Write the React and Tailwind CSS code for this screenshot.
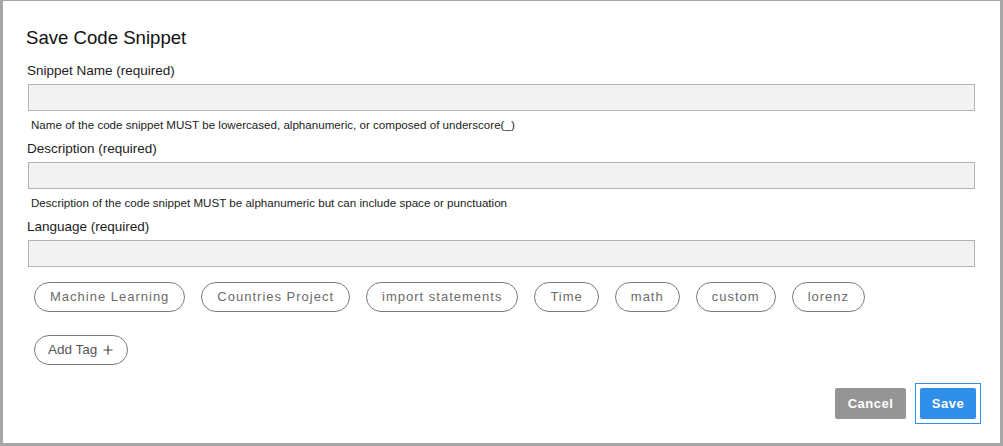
const tags = [
  'Machine Learning',
  'Countries Project',
  'import statements',
  'Time',
  'math',
  'custom',
  'lorenz',
]

const Field = ({ label, help, first }) => (
  <div className="flex flex-col">
    <label className={`${first ? 'mt-[14px]' : 'mt-[9px]'} text-[13.5px] leading-[16px] text-[#1c1c1c]`}>
      {label}
    </label>
    <input
      type="text"
      className="mt-[5px] ml-[1px] h-[27px] border border-[#b4b4b4] bg-[#f2f2f2] outline-none"
    />
    {help && (
      <p className="mt-[7px] ml-[4px] text-[11.6px] leading-[14px] text-[#222]">{help}</p>
    )}
  </div>
)

const App = () => {
  return (
    <div
      className="w-[1003px] h-[446px] bg-[#a7a7a7] pt-[1px] pl-[3px] pr-[3px] pb-[3px]"
      style={{ fontFamily: '"Liberation Sans", Arial, sans-serif' }}
    >
      <div className="w-full h-full bg-white pl-[24px] pr-[25px] pt-[26px] flex flex-col">
        <h2 className="text-[18.6px] leading-[22px] text-[#111] ml-[-1px]">Save Code Snippet</h2>

        <Field
          first
          label="Snippet Name (required)"
          help="Name of the code snippet MUST be lowercased, alphanumeric, or composed of underscore(_)"
        />
        <Field
          label="Description (required)"
          help="Description of the code snippet MUST be alphanumeric but can include space or punctuation"
        />
        <Field label="Language (required)" />

        {/* 태그 목록 */}
        <div className="mt-[15px] ml-[7px] flex gap-[16px]">
          {tags.map((t) => (
            <button
              key={t}
              className="h-[30px] px-[15px] rounded-full border border-[#7a7a7a] text-[13px] tracking-[1px] text-[#6b6b6b] bg-white"
            >
              {t}
            </button>
          ))}
        </div>

        <div className="mt-[23px] ml-[7px]">
          <button className="h-[30px] pl-[13px] pr-[14px] rounded-full border border-[#7a7a7a] text-[13.5px] text-[#555] bg-white flex items-center gap-[6px]">
            Add Tag
            <svg width="10" height="10" viewBox="0 0 10 10">
              <path d="M5 0.5v9M0.5 5h9" stroke="#444" strokeWidth="1.2" />
            </svg>
          </button>
        </div>

        <div className="mt-[18px] mr-[-6px] flex justify-end items-center gap-[9px]">
          <button className="h-[31px] w-[71px] rounded-[2px] bg-[#959595] text-white text-[13px] font-bold tracking-[0.5px]">
            Cancel
          </button>
          <div className="border border-[#2f8fe9] p-[4px]">
            <button className="block h-[31px] w-[56px] rounded-[2px] bg-[#2f8fe9] text-white text-[13px] font-bold tracking-[0.5px]">
              Save
            </button>
          </div>
        </div>
      </div>
    </div>
  )
}

export default App
